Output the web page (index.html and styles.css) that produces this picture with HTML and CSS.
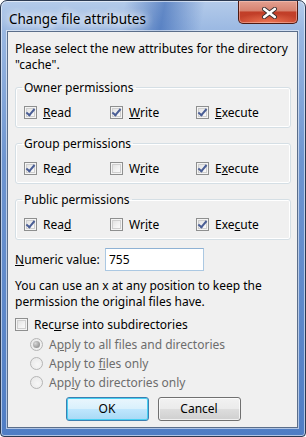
FILE: index.html
```html
<!DOCTYPE html>
<html>
<head>
<meta charset="utf-8">
<link rel="stylesheet" href="styles.css">
</head>
<body>
<div class="window">
  <div class="titlebar">
    <span class="title">Change file attributes</span>
    <div class="close">
      <svg width="15" height="12" viewBox="0 0 15 12">
        <path d="M2.2 2 L12.8 10 M12.8 2 L2.2 10" stroke="#3a3030" stroke-width="4.4" stroke-linecap="round" fill="none"/>
        <path d="M2.2 2 L12.8 10 M12.8 2 L2.2 10" stroke="#ffffff" stroke-width="2.7" stroke-linecap="round" fill="none"/>
      </svg>
    </div>
  </div>
  <div class="client">
    <p class="intro">Please select the new attributes for the directory<br>"cache".</p>

    <fieldset class="group">
      <legend>Owner permissions</legend>
      <div class="row">
        <label class="check"><span class="box on"></span><span><u>R</u>ead</span></label>
        <label class="check"><span class="box on"></span><span><u>W</u>rite</span></label>
        <label class="check"><span class="box on"></span><span><u>E</u>xecute</span></label>
      </div>
    </fieldset>

    <fieldset class="group">
      <legend>Group permissions</legend>
      <div class="row">
        <label class="check"><span class="box on"></span><span>Re<u>a</u>d</span></label>
        <label class="check"><span class="box"></span><span>W<u>r</u>ite</span></label>
        <label class="check"><span class="box on"></span><span>E<u>x</u>ecute</span></label>
      </div>
    </fieldset>

    <fieldset class="group">
      <legend>Public permissions</legend>
      <div class="row">
        <label class="check"><span class="box on"></span><span>Rea<u>d</u></span></label>
        <label class="check"><span class="box"></span><span>Wr<u>i</u>te</span></label>
        <label class="check"><span class="box on"></span><span>Exe<u>c</u>ute</span></label>
      </div>
    </fieldset>

    <div class="numeric">
      <span class="numlabel"><u>N</u>umeric value:</span>
      <div class="edit">755</div>
    </div>

    <p class="help">You can use an x at any position to keep the<br>permission the original files have.</p>

    <label class="check recurse"><span class="box"></span><span>Rec<u>u</u>rse into subdirectories</span></label>

    <div class="radios">
      <div class="radio"><span class="dot sel"></span><span>A<u>p</u>ply to all files and directories</span></div>
      <div class="radio"><span class="dot"></span><span>Apply to <u>f</u>iles only</span></div>
      <div class="radio"><span class="dot"></span><span>App<u>l</u>y to directories only</span></div>
    </div>

    <div class="buttons">
      <div class="btn default">OK</div>
      <div class="btn">Cancel</div>
    </div>
  </div>
</div>
</body>
</html>
```

FILE: styles.css
```css
html, body {
  margin: 0;
  padding: 0;
}
body {
  width: 306px;
  height: 437px;
  overflow: hidden;
  font-family: "Noto Sans", "Open Sans", sans-serif;
  font-size: 12px;
  color: #000;
  background: #fff;
}
.window {
  box-sizing: border-box;
  width: 306px;
  height: 437px;
  border: 1px solid #2c3a52;
  border-radius: 7px 7px 4px 4px;
  display: flex;
  flex-direction: column;
  background:
    linear-gradient(100deg, rgba(255,255,255,0) 40%, rgba(35,85,170,0.55) 53%, rgba(255,255,255,0) 66%) top / 100% 34px no-repeat,
    linear-gradient(to bottom, #b4cbea 0, #9ab8e2 30px, #6e95d0 160px, #4f7dc4 437px);
  box-shadow: inset 0 0 0 1px rgba(255,255,255,0.55);
  overflow: hidden;
}
.titlebar {
  height: 30px;
  display: flex;
  align-items: flex-start;
  flex: none;
}
.title {
  margin-top: 10px;
  padding-left: 8px;
  font-size: 13.5px;
  line-height: 17px;
  color: #000;
  text-shadow: 0 0 8px #fff, 0 0 10px rgba(255,255,255,0.9), 0 0 14px rgba(255,255,255,0.8);
}
.close {
  margin-left: auto;
  margin-right: 7px;
  width: 60px;
  height: 23px;
  box-sizing: border-box;
  border: 1px solid #4e1a12;
  border-top: none;
  border-radius: 0 0 5px 5px;
  background:
    radial-gradient(ellipse 60% 45% at 50% 100%, rgba(255,140,100,0.7), rgba(255,140,100,0) 100%),
    linear-gradient(to bottom, #e2a091 0, #d6826f 45%, #c13e28 50%, #c5432d 100%);
  box-shadow: inset 0 0 0 1px rgba(255,210,200,0.45);
  display: flex;
  align-items: center;
  justify-content: center;
}
.close svg {
  display: block;
  margin: 1px 0 0 3px;
}
.client {
  flex: 1;
  margin: 0 7px 8px 6px;
  border: 1px solid #5b6e8a;
  box-shadow: 0 0 0 1px rgba(255,255,255,0.55);
  background: #f0f0f0;
  padding: 9px 6px 6px 7px;
  display: flex;
  flex-direction: column;
}
.intro {
  margin: 0;
  line-height: 16px;
}
.group {
  margin: 7px 0 0;
  padding: 0 8px 7px;
  border: 1px solid #d5dfe5;
  border-radius: 3px;
  box-shadow: inset 0 0 0 1px #fff;
}
.group + .group {
  margin-top: 8px;
}
.group legend {
  padding: 0 2px;
  margin-left: -2px;
  line-height: 15px;
}
.row {
  margin-top: 10px;
  display: grid;
  grid-template-columns: 86px 86px 86px;
}
.check {
  display: flex;
  align-items: center;
  gap: 6px;
  line-height: 15px;
}
.box {
  box-sizing: border-box;
  width: 13px;
  height: 13px;
  flex: none;
  border: 1px solid #8e8f8f;
  background: linear-gradient(135deg, #dcdcdc 0, #f4f4f4 60%, #fefefe 100%);
  box-shadow: inset 0 0 0 1px #f4f4f4, inset 0 0 0 2px #cfcfcf;
  position: relative;
}
.box.on::after {
  content: "";
  position: absolute;
  left: 3px;
  top: 0px;
  width: 3px;
  height: 7px;
  border: solid #4a5e95;
  border-width: 0 2px 2px 0;
  transform: rotate(40deg);
  transform-origin: center;
}
.numeric {
  margin-top: 8px;
  display: flex;
  align-items: center;
}
.numlabel {
  width: 90px;
  flex: none;
}
.edit {
  box-sizing: border-box;
  width: 99px;
  height: 23px;
  border: 1px solid #abc8e2;
  border-top-color: #8fb2d4;
  background: #fff;
  padding-left: 3px;
  line-height: 21px;
}
.help {
  margin: 7px 0 0;
  line-height: 16px;
}
.recurse {
  margin-top: 7px;
}
.radios {
  margin-top: 3px;
  padding-left: 15px;
  color: #6d6d6d;
}
.radio {
  height: 19px;
  display: flex;
  align-items: center;
  gap: 6px;
}
.dot {
  box-sizing: border-box;
  width: 13px;
  height: 13px;
  flex: none;
  border-radius: 50%;
  border: 1px solid #b5b5b5;
  background: radial-gradient(circle at 60% 60%, #f6f6f6 0, #e6e6e6 100%);
  position: relative;
}
.dot.sel::after {
  content: "";
  position: absolute;
  left: 2px;
  top: 2px;
  width: 7px;
  height: 7px;
  border-radius: 50%;
  background: radial-gradient(circle at 35% 35%, #d8d8d8 0, #a0a0a0 60%, #8c8c8c 100%);
}
.buttons {
  margin-top: auto;
  display: flex;
  justify-content: center;
  gap: 9px;
}
.btn {
  box-sizing: border-box;
  width: 83px;
  height: 24px;
  border: 1px solid #707070;
  border-radius: 3px;
  background: linear-gradient(to bottom, #f2f2f2 0, #ebebeb 48%, #dddddd 52%, #cfcfcf 100%);
  box-shadow: inset 0 0 0 1px rgba(255,255,255,0.7);
  text-align: center;
  line-height: 22px;
}
.btn.default {
  border-color: #3c7fb1;
  background: linear-gradient(to bottom, #eaf6fd 0, #d9f0fc 48%, #bee6fd 52%, #a7d9f5 100%);
  box-shadow: inset 0 0 0 1px #48d0f2;
}
```
